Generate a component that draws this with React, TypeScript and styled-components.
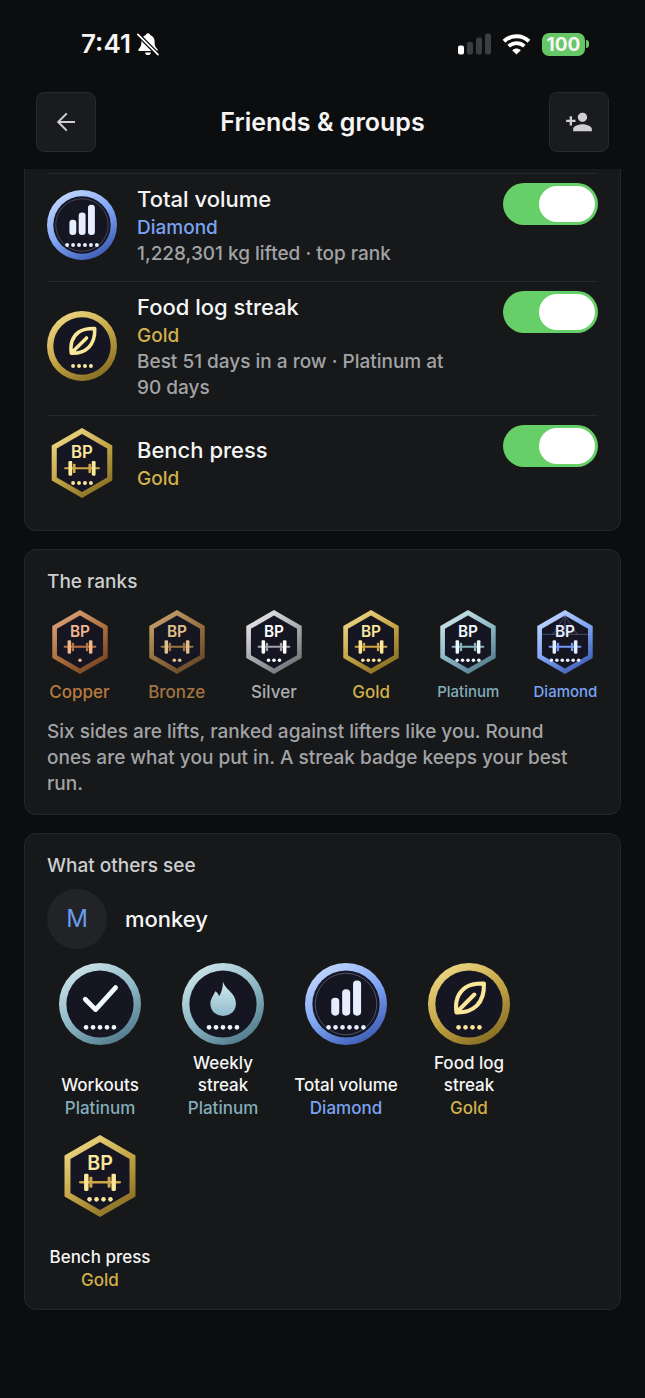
import { useId, useState } from "react";
import styled, { createGlobalStyle } from "styled-components";
import { MdPersonAdd } from "react-icons/md";

type Rank = "copper" | "bronze" | "silver" | "gold" | "platinum" | "diamond";
type Emblem = "lift" | "check" | "flame" | "bars" | "leaf";

const ranks: Record<Rank, { label: string; text: string; dots: number; ring: string[]; light: string; mid: string }> = {
  copper: { label: "Copper", text: "#b87a40", dots: 1, ring: ["#dfa47c", "#b0703f", "#70401f"], light: "#f0b78e", mid: "#b8743f" },
  bronze: { label: "Bronze", text: "#a37442", dots: 2, ring: ["#c9a26c", "#967042", "#604324"], light: "#e0c08a", mid: "#9c7443" },
  silver: { label: "Silver", text: "#adadb1", dots: 3, ring: ["#ececf0", "#acadb2", "#6a6b70"], light: "#ffffff", mid: "#a3a4a9" },
  gold: { label: "Gold", text: "#d2b04a", dots: 4, ring: ["#f0da88", "#c4a546", "#80671f"], light: "#fbe79a", mid: "#cda543" },
  platinum: { label: "Platinum", text: "#84adb9", dots: 5, ring: ["#cfe7eb", "#8fb9c6", "#4b7486"], light: "#eefafc", mid: "#86b3c1" },
  diamond: { label: "Diamond", text: "#7aa3f3", dots: 6, ring: ["#c6dafe", "#7fa5f6", "#3655ac"], light: "#e6edff", mid: "#6f99f2" },
};

const GlobalStyle = createGlobalStyle`
  * {
    box-sizing: border-box;
  }
  body {
    margin: 0;
    background-color: #0c0d0e;
    color: #f5f5f5;
    font-family: Inter, "Liberation Sans", sans-serif;
  }
  h1, h2, h3, p, ul {
    margin: 0;
    padding: 0;
  }
  ul {
    list-style: none;
  }
`

const Page = styled.div`
  display: flex;
  flex-direction: column;
  padding-bottom: 86px;
`

const StatusBar = styled.div`
  display: flex;
  justify-content: space-between;
  align-items: center;
  height: 88px;
  padding: 0 56px 0 81px;
`

const StatusGroup = styled.div`
  display: flex;
  align-items: center;
  gap: ${(props: { $gap: number }) => props.$gap}px;
`

const Time = styled.span`
  font-size: 26px;
  font-weight: 600;
  line-height: 32px;
`

const Battery = styled.div`
  display: flex;
  align-items: center;
  gap: 1px;
`

const BatteryBody = styled.span`
  width: 43px;
  height: 23px;
  border-radius: 7px;
  background-color: #66c766;
  font-size: 19px;
  font-weight: 700;
  line-height: 23px;
  text-align: center;
`

const BatteryTip = styled.span`
  width: 3px;
  height: 8px;
  border-radius: 0 3px 3px 0;
  background-color: #66c766;
`

const Header = styled.header`
  display: flex;
  justify-content: space-between;
  align-items: center;
  padding: 4px 36px 17px;
`

const Title = styled.h1`
  font-size: 25px;
  font-weight: 600;
  line-height: 32px;
`

const IconButton = styled.button`
  display: flex;
  justify-content: center;
  align-items: center;
  width: 60px;
  height: 60px;
  padding: 0;
  border: 1px solid #28292b;
  border-radius: 8px;
  background-color: #191b1c;
  color: #cfcfd1;
`

const Main = styled.main`
  display: flex;
  flex-direction: column;
  gap: 18px;
  padding: 0 24px;
`

const Card = styled.section`
  padding: 19px 22px 17px;
  border: 1px solid #252628;
  border-radius: 12px;
  background-color: #161819;
`

const ScrolledCard = styled(Card)`
  padding: 4px 22px 15px;
  border-top: none;
  border-radius: 0 0 12px 12px;
`

const SettingRow = styled.li`
  display: flex;
  align-items: center;
  gap: 20px;
  padding: 9px 0 14px;
  border-top: 1px solid #27282a;
`

const SettingBody = styled.div`
  display: flex;
  flex: 1;
  flex-direction: column;
  justify-content: center;
  min-height: 76px;
`

const SettingName = styled.label`
  font-size: 22px;
  font-weight: 500;
  line-height: 32px;
`

const RankText = styled.span`
  color: ${(props: { $color: string }) => props.$color};
  font-size: 19px;
  font-weight: 500;
  line-height: 26px;
`

const Note = styled.p`
  padding-right: 20px;
  color: #a2a3a6;
  font-size: 19px;
  font-weight: 500;
  line-height: 26px;
`

const Toggle = styled.input`
  appearance: none;
  align-self: flex-start;
  flex-shrink: 0;
  width: 95px;
  height: 42px;
  margin: 0;
  padding: 3px;
  border-radius: 21px;
  background-color: #3a3b3d;

  &::before {
    content: "";
    display: block;
    width: 56px;
    height: 36px;
    border-radius: 18px;
    background-color: #ffffff;
  }

  &:checked {
    background-color: #67cf67;
  }

  &:checked::before {
    margin-left: auto;
  }
`

const SectionTitle = styled.h2`
  color: #cdced0;
  font-size: 19px;
  font-weight: 500;
  line-height: 26px;
`

const RankList = styled.ul`
  display: flex;
  justify-content: space-between;
  padding: 15px 0;
`

const RankItem = styled.li`
  display: flex;
  flex-direction: column;
  align-items: center;
  gap: 6px;
  width: 65px;
`

const RankLabel = styled.span`
  color: ${(props: { $color: string; $small: boolean }) => props.$color};
  font-size: ${(props) => props.$small ? 15 : 17}px;
  font-weight: 500;
  line-height: 24px;
`

const Profile = styled.div`
  display: flex;
  align-items: center;
  gap: 18px;
  padding: 10px 0 14px;
`

const Avatar = styled.span`
  width: 60px;
  height: 60px;
  border-radius: 50%;
  background-color: #212327;
  color: #6a9bee;
  font-size: 24px;
  line-height: 60px;
  text-align: center;
`

const ProfileName = styled.h3`
  font-size: 22px;
  font-weight: 500;
`

const BadgeGrid = styled.ul`
  display: flex;
  flex-wrap: wrap;
  gap: 15px 17px;
`

const BadgeItem = styled.li`
  display: flex;
  flex-direction: column;
  align-items: center;
  gap: 7px;
  width: 106px;
  text-align: center;
`

const BadgeCaption = styled.div`
  display: flex;
  flex-direction: column;
  justify-content: flex-end;
  min-height: 68px;
`

const BadgeName = styled.span`
  font-size: 17px;
  font-weight: 500;
  line-height: 22px;
`

const BadgeRank = styled(RankText)`
  font-size: 17px;
  line-height: 24px;
`

const HEX_OUTER = "50,0 93.3,25 93.3,75 50,100 6.7,75 6.7,25";
const HEX_INNER = "50,8.5 86,29.3 86,70.7 50,91.5 14,70.7 14,29.3";

interface BadgeProps {
  rank: Rank;
  emblem: Emblem;
  size: number;
}

const Badge = ({ rank, emblem, size }: BadgeProps) => {
  const id = useId();
  const { ring, light, mid, dots } = ranks[rank];
  const isHex = emblem === "lift";
  return (
    <svg width={size} height={size} viewBox="0 0 100 100" aria-hidden="true">
      <defs>
        <linearGradient id={id + "ring"} x1="0.2" y1="0" x2="0.8" y2="1">
          <stop offset="0" stopColor={ring[0]} />
          <stop offset="0.5" stopColor={ring[1]} />
          <stop offset="1" stopColor={ring[2]} />
        </linearGradient>
        <linearGradient id={id + "fire"} x1="0" y1="0" x2="0" y2="1">
          <stop offset="0" stopColor="#d3ebef" />
          <stop offset="1" stopColor="#8fbccb" />
        </linearGradient>
        <filter id={id + "soft"} x="-10%" y="-10%" width="120%" height="120%">
          <feGaussianBlur stdDeviation="0.9" />
        </filter>
      </defs>
      {isHex ? (
        <>
          <polygon points={HEX_OUTER} fill={`url(#${id}ring)`} />
          <polygon points={HEX_INNER} fill="#151722" filter={`url(#${id}soft)`} />
          {rank === "diamond" && (
            <path d="M14 38H86M50 9V38M50 9L31 38M50 9L69 38" stroke="#9db6f0" strokeOpacity="0.45" strokeWidth="1.2" fill="none" />
          )}
          <text x="50" y="42.5" fill={light} fontSize="24" fontWeight="600" textAnchor="middle">BP</text>
          <g fill={mid}>
            <rect x="24.5" y="56" width="51" height="3" rx="1" />
            <rect x="37" y="51" width="3.8" height="13.4" rx="1.2" />
            <rect x="59.2" y="51" width="3.8" height="13.4" rx="1.2" />
          </g>
          <g fill={light}>
            <rect x="30.6" y="47.2" width="5.4" height="21" rx="1.6" />
            <rect x="64" y="47.2" width="5.4" height="21" rx="1.6" />
          </g>
        </>
      ) : (
        <>
          <circle cx="50" cy="50" r="50" fill={`url(#${id}ring)`} />
          <circle cx="50" cy="50" r="41" fill="#151722" filter={`url(#${id}soft)`} />
          {rank === "diamond" && <circle cx="50" cy="50" r="37.5" fill="none" stroke="#a9b6d6" strokeOpacity="0.5" strokeWidth="0.9" />}
        </>
      )}
      {emblem === "check" && (
        <path d="M32 44.2L44.6 56.8L69 30" fill="none" stroke={light} strokeWidth="5.8" strokeLinecap="round" strokeLinejoin="round" />
      )}
      {emblem === "flame" && (
        <path
          d="M50 22.3C51.5 32 65.8 36 65.8 49.5C65.8 58.5 59 64.5 50.2 64.5C41.4 64.5 34.6 58.5 34.6 49.8C34.6 43.5 38.5 39.5 40.6 34.3C43.2 35.8 44.6 37.8 45.2 40.5C48.3 36 50 30 50 22.3Z"
          fill={`url(#${id}fire)`}
        />
      )}
      {emblem === "bars" && (
        <g fill={light}>
          <rect x="32" y="42.4" width="9.8" height="21.8" rx="4.6" />
          <rect x="45.3" y="32" width="9.8" height="32.2" rx="4.6" />
          <rect x="58.6" y="21.2" width="9.8" height="43" rx="4.6" />
        </g>
      )}
      {emblem === "leaf" && (
        <path
          d="M34.7 60.3C32.8 47 36.5 36.5 45.5 30C52 25.6 60 24.8 68.2 25C68.6 36 66 45.5 59.5 52C52.5 58.8 45 60.6 34.7 60.3ZM36 59L56.5 38.5"
          fill="none"
          stroke={light}
          strokeWidth="5"
          strokeLinecap="round"
          strokeLinejoin="round"
        />
      )}
      {Array.from({ length: dots }, (_, i) => (
        <circle key={i} cx={50 + (i - (dots - 1) / 2) * 8.5} cy="78.5" r="2.8" fill={light} />
      ))}
    </svg>
  )
}

const settings: { id: string; name: string; rank: Rank; emblem: Emblem; note?: string }[] = [
  { id: "volume", name: "Total volume", rank: "diamond", emblem: "bars", note: "1,228,301 kg lifted · top rank" },
  { id: "food", name: "Food log streak", rank: "gold", emblem: "leaf", note: "Best 51 days in a row · Platinum at 90 days" },
  { id: "bench", name: "Bench press", rank: "gold", emblem: "lift" },
];

const shared: { name: string; rank: Rank; emblem: Emblem }[] = [
  { name: "Workouts", rank: "platinum", emblem: "check" },
  { name: "Weekly streak", rank: "platinum", emblem: "flame" },
  { name: "Total volume", rank: "diamond", emblem: "bars" },
  { name: "Food log streak", rank: "gold", emblem: "leaf" },
  { name: "Bench press", rank: "gold", emblem: "lift" },
];

const PhoneStatus = () => (
  <StatusBar>
    <StatusGroup $gap={5}>
      <Time>7:41</Time>
      <svg width="24" height="24" viewBox="0 0 24 24" aria-hidden="true">
        <path d="M12 1.2C10.8 1.2 10 2 9.9 3C7 4 5.4 6.4 5.4 9.5C5.4 14 4.4 15.2 2.6 17.2C2 18 2.4 19 3.4 19H20.6C21.6 19 22 18 21.4 17.2C19.6 15.2 18.6 14 18.6 9.5C18.6 6.4 17 4 14.1 3C14 2 13.2 1.2 12 1.2Z" fill="#fff" />
        <path d="M9 20.4H15C14.8 22 13.6 23 12 23S9.2 22 9 20.4Z" fill="#fff" />
        <path d="M1 1.6L22.6 23.4" stroke="#0c0d0e" strokeWidth="4.2" />
        <path d="M1.8 2.4L22 22.6" stroke="#fff" strokeWidth="1.7" strokeLinecap="round" />
      </svg>
    </StatusGroup>
    <StatusGroup $gap={11}>
      <svg width="33" height="22" viewBox="0 0 33 22" aria-hidden="true">
        <rect x="0" y="12.5" width="6" height="9" rx="2" fill="#fff" />
        <rect x="9" y="9" width="6" height="12.5" rx="2" fill="#3c3d3f" />
        <rect x="18" y="4.5" width="6" height="17" rx="2" fill="#3c3d3f" />
        <rect x="27" y="0.5" width="6" height="21" rx="2" fill="#3c3d3f" />
      </svg>
      <svg width="29" height="21" viewBox="0 0 29 21" aria-hidden="true">
        <path d="M2 7.3C9 0.6 20 0.6 27 7.3" fill="none" stroke="#fff" strokeWidth="4" />
        <path d="M6.7 12.2C11.2 8.2 17.8 8.2 22.3 12.2" fill="none" stroke="#fff" strokeWidth="3.8" />
        <path d="M14.5 20.6L10.2 16.2C12.8 14 16.2 14 18.8 16.2Z" fill="#fff" />
      </svg>
      <Battery>
        <BatteryBody>100</BatteryBody>
        <BatteryTip />
      </Battery>
    </StatusGroup>
  </StatusBar>
)

const App = () => {
  const [visible, setVisible] = useState<Record<string, boolean>>({ volume: true, food: true, bench: true });
  const onToggle = (event: React.ChangeEvent<HTMLInputElement>) => {
    const { id, checked } = event.currentTarget;
    setVisible((prev) => ({ ...prev, [id]: checked }));
  }
  return (
    <Page>
      <GlobalStyle />
      <PhoneStatus />
      <Header>
        <IconButton aria-label="Back">
          <svg width="20" height="20" viewBox="0 0 20 20" fill="none" stroke="currentColor" strokeWidth="2" aria-hidden="true">
            <path d="M19 10H2.2M10.8 1.4L2.2 10L10.8 18.6" />
          </svg>
        </IconButton>
        <Title>Friends &amp; groups</Title>
        <IconButton aria-label="Add friend">
          <MdPersonAdd size={28} />
        </IconButton>
      </Header>
      <Main>
        <ScrolledCard>
          <ul>
            {settings.map((item) => (
              <SettingRow key={item.id}>
                <Badge rank={item.rank} emblem={item.emblem} size={70} />
                <SettingBody>
                  <SettingName htmlFor={item.id}>{item.name}</SettingName>
                  <RankText $color={ranks[item.rank].text}>{ranks[item.rank].label}</RankText>
                  {item.note && <Note>{item.note}</Note>}
                </SettingBody>
                <Toggle type="checkbox" id={item.id} checked={visible[item.id]} onChange={onToggle} />
              </SettingRow>
            ))}
          </ul>
        </ScrolledCard>
        <Card>
          <SectionTitle>The ranks</SectionTitle>
          <RankList>
            {(Object.keys(ranks) as Rank[]).map((rank) => (
              <RankItem key={rank}>
                <Badge rank={rank} emblem="lift" size={64} />
                <RankLabel $color={ranks[rank].text} $small={ranks[rank].label.length > 6}>{ranks[rank].label}</RankLabel>
              </RankItem>
            ))}
          </RankList>
          <Note>
            Six sides are lifts, ranked against lifters like you. Round ones are what you put in. A streak badge keeps your best run.
          </Note>
        </Card>
        <Card>
          <SectionTitle>What others see</SectionTitle>
          <Profile>
            <Avatar>M</Avatar>
            <ProfileName>monkey</ProfileName>
          </Profile>
          <BadgeGrid>
            {shared.map((item) => (
              <BadgeItem key={item.name}>
                <Badge rank={item.rank} emblem={item.emblem} size={82} />
                <BadgeCaption>
                  <BadgeName>{item.name}</BadgeName>
                  <BadgeRank $color={ranks[item.rank].text}>{ranks[item.rank].label}</BadgeRank>
                </BadgeCaption>
              </BadgeItem>
            ))}
          </BadgeGrid>
        </Card>
      </Main>
    </Page>
  )
}

export default App;
